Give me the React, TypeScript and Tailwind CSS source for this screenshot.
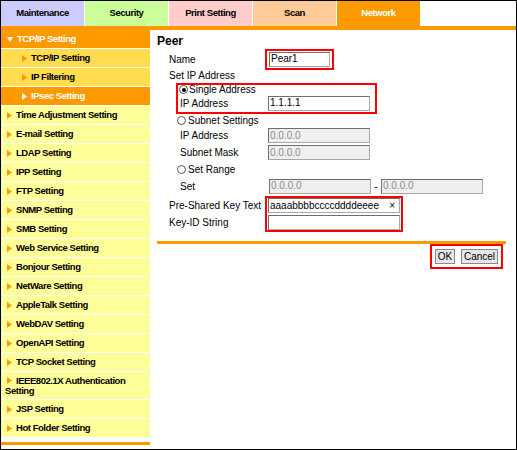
import React from "react"

const tabs = [
    { label: "Maintenance", bg: "bg-[#ccccff]", text: "text-black" },
    { label: "Security", bg: "bg-[#ccff99]", text: "text-black" },
    { label: "Print Setting", bg: "bg-[#ffcccc]", text: "text-black" },
    { label: "Scan", bg: "bg-[#ffcc99]", text: "text-black" },
    { label: "Network", bg: "bg-[#ff9900]", text: "text-white" },
]

const menuItems = [
    "Time Adjustment Setting",
    "E-mail Setting",
    "LDAP Setting",
    "IPP Setting",
    "FTP Setting",
    "SNMP Setting",
    "SMB Setting",
    "Web Service Setting",
    "Bonjour Setting",
    "NetWare Setting",
    "AppleTalk Setting",
    "WebDAV Setting",
    "OpenAPI Setting",
    "TCP Socket Setting",
    "IEEE802.1X Authentication Setting",
    "JSP Setting",
    "Hot Folder Setting",
]

function Arrow({ color = "#ff9900" }: { color?: string }) {
    return (
        <svg width="5" height="7" viewBox="0 0 5 7" className="inline-block align-baseline">
            <polygon points="0,0 5,3.5 0,7" fill={color} />
        </svg>
    )
}

function Radio({ checked }: { checked?: boolean }) {
    return (
        <span className="relative inline-block w-[9px] h-[9px] rounded-full border border-[#555] bg-white shrink-0">
            {checked && <span className="absolute left-[1.5px] top-[1.5px] w-[4px] h-[4px] rounded-full bg-black" />}
        </span>
    )
}

function Field({ value, width, disabled, clear }: { value?: string; width: string; disabled?: boolean; clear?: boolean }) {
    return (
        <div
            className={`${width} h-[15px] flex items-center justify-between pl-[1px] pr-[4px] border border-t-[#6e6e6e] border-l-[#6e6e6e] border-r-[#a8a8a8] border-b-[#a8a8a8] text-[10px] leading-none ${
                disabled ? "bg-[#efefef] text-[#8c8c8c]" : "bg-white text-black"
            }`}
        >
            <span>{value}</span>
            {clear && <span className="text-[10px] text-black">×</span>}
        </div>
    )
}

function Sidebar() {
    return (
        <div className="w-[149px] flex flex-col font-bold text-[9.5px] tracking-[-0.45px]">
            <div className="h-[19px] border-b border-white bg-[#ff9900] text-white flex items-center pl-[6px] gap-[4px]">
                <svg width="6" height="5" viewBox="0 0 6 5">
                    <polygon points="0,0 6,0 3,5" fill="#ffffff" />
                </svg>
                <span>TCP/IP Setting</span>
            </div>
            <div className="h-[19px] border-b border-white bg-[#ffdc50] flex items-center pl-[21px] gap-[4px]">
                <Arrow />
                <span>TCP/IP Setting</span>
            </div>
            <div className="h-[19px] border-b border-white bg-[#ffdc50] flex items-center pl-[21px] gap-[4px]">
                <Arrow />
                <span>IP Filtering</span>
            </div>
            <div className="h-[19px] border-b border-white bg-[#ff9900] text-white flex items-center pl-[21px] gap-[4px]">
                <Arrow color="#ffffff" />
                <span>IPsec Setting</span>
            </div>
            {menuItems.map((item) =>
                item.startsWith("IEEE") ? (
                    <div key={item} className="h-[28px] border-b border-white bg-[#ffff99] pl-[4px] pt-[4px] leading-[10px]">
                        <span className="ml-[2px] mr-[4px]">
                            <Arrow />
                        </span>
                        {item}
                    </div>
                ) : (
                    <div key={item} className="h-[19px] border-b border-white bg-[#ffff99] flex items-center pl-[6px] gap-[4px]">
                        <Arrow />
                        <span>{item}</span>
                    </div>
                )
            )}
            <div className="mt-[4px] h-[3px] bg-[#ff9900]" />
        </div>
    )
}

export default function App() {
    return (
        <div className="w-[517px] h-[450px] border border-black bg-white flex flex-col text-black font-['Liberation_Sans',Arial,sans-serif]">
            <div className="h-[25px] flex gap-[1px]">
                {tabs.map((t) => (
                    <div
                        key={t.label}
                        className={`w-[83px] flex items-center justify-center font-bold text-[9.5px] tracking-[-0.45px] ${t.bg} ${t.text}`}
                    >
                        {t.label}
                    </div>
                ))}
            </div>
            <div className="h-[4px] bg-[#ff9900]" />
            <div className="flex flex-1">
                <Sidebar />
                <div className="flex-1 pl-[7px] pr-[10px] pt-[3px] text-[10px]">
                    <div className="h-[16px] leading-[16px] font-bold text-[12px]">Peer</div>
                    <div className="pl-[12px]">
                        <div className="h-[20px] flex items-center">
                            <span className="w-[96px]">Name</span>
                            <div className="border-2 border-[#ff0000] px-[2px] py-[1px]">
                                <Field value="Pear1" width="w-[61px]" />
                            </div>
                        </div>
                        <div className="h-[12px] flex items-center">Set IP Address</div>
                        <div className="mt-[2px] ml-[7px] w-[201px] h-[31px] border-2 border-[#ff0000]">
                            <div className="h-[9px] flex items-center gap-[1px] pl-[1px]">
                                <Radio checked />
                                <span>Single Address</span>
                            </div>
                            <div className="h-[18px] flex items-center">
                                <span className="w-[90px] pl-[2px]">IP Address</span>
                                <Field value="1.1.1.1" width="w-[102px]" />
                            </div>
                        </div>
                        <div className="h-[13px] flex items-center gap-[2px] pl-[8px]">
                            <Radio />
                            <span>Subnet Settings</span>
                        </div>
                        <div className="h-[17px] flex items-center">
                            <span className="w-[99px] pl-[11px]">IP Address</span>
                            <Field value="0.0.0.0" width="w-[102px]" disabled />
                        </div>
                        <div className="h-[17px] flex items-center">
                            <span className="w-[99px] pl-[11px]">Subnet Mask</span>
                            <Field value="0.0.0.0" width="w-[102px]" disabled />
                        </div>
                        <div className="h-[16px] flex items-center gap-[2px] pl-[8px]">
                            <Radio />
                            <span>Set Range</span>
                        </div>
                        <div className="h-[18px] flex items-center">
                            <span className="w-[100px] pl-[11px]">Set</span>
                            <Field value="0.0.0.0" width="w-[102px]" disabled />
                            <span className="w-[10px] text-center">-</span>
                            <Field value="0.0.0.0" width="w-[102px]" disabled />
                        </div>
                        <div className="mt-[1px] flex">
                            <div className="w-[96px] flex flex-col">
                                <span className="h-[18px] flex items-center">Pre-Shared Key Text</span>
                                <span className="h-[17px] flex items-center">Key-ID String</span>
                            </div>
                            <div className="border-2 border-[#ff0000] px-[1px] flex flex-col gap-[2px]">
                                <Field value="aaaabbbbccccddddeeee" width="w-[132px]" clear />
                                <Field value="" width="w-[132px]" />
                            </div>
                        </div>
                    </div>
                    <div className="mt-[9px] h-[3px] bg-[#ff9900]" />
                    <div className="flex justify-end pr-[3px]">
                        <div className="border-2 border-[#ff0000] p-[3px] flex gap-[6px]">
                            <button className="w-[20px] h-[15px] border border-[#8a8a8a] bg-[#e6e6e6] text-[10px] leading-none flex items-center justify-center">
                                OK
                            </button>
                            <button className="w-[37px] h-[15px] border border-[#8a8a8a] bg-[#e6e6e6] text-[10px] leading-none flex items-center justify-center">
                                Cancel
                            </button>
                        </div>
                    </div>
                </div>
            </div>
        </div>
    )
}
